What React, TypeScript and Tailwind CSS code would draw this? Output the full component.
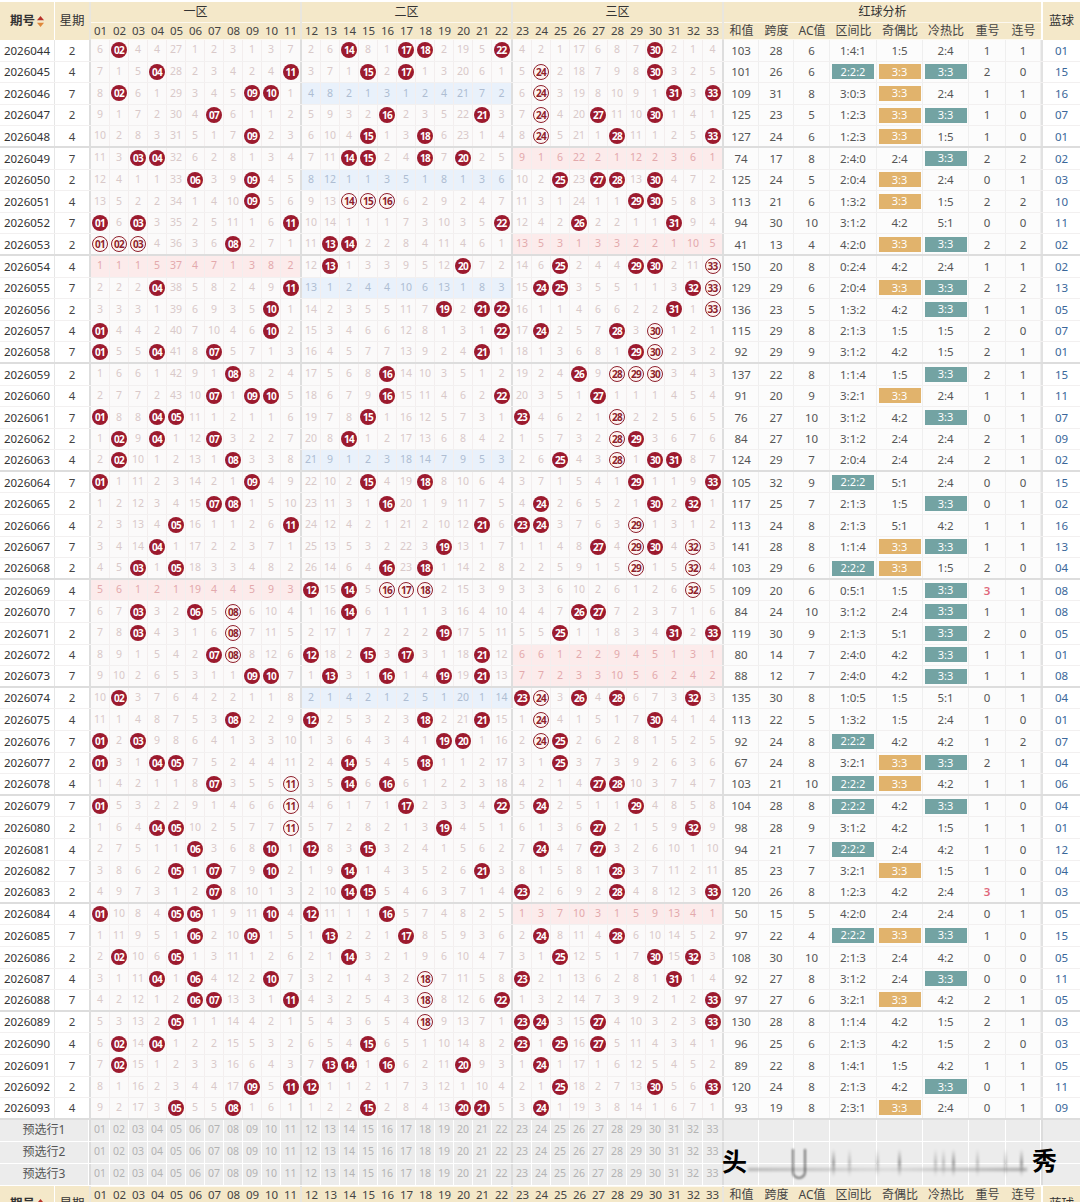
const ROWS = [
  '02 14 17 18 22 30|',
  '04 11 15 17 24 30|24',
  '02 09 10 24 31 33|24',
  '07 16 21 24 27 30|24',
  '09 15 18 24 28 33|24',
  '03 04 14 15 18 20|',
  '06 09 25 27 28 30|',
  '09 14 15 16 29 30|14 15 16',
  '01 03 11 22 26 31|',
  '01 02 03 08 13 14|01 02 03',
  '13 20 25 29 30 33|33',
  '04 11 24 25 32 33|33',
  '10 19 21 22 31 33|33',
  '01 10 22 24 28 30|30',
  '01 04 07 21 29 30|30',
  '08 16 26 28 29 30|28 29 30',
  '07 09 10 16 22 27|',
  '01 04 05 15 23 28|28',
  '02 04 07 14 28 29|28',
  '02 08 25 28 30 31|28',
  '01 09 15 18 29 33|',
  '07 08 16 24 30 32|',
  '05 11 21 23 24 29|29',
  '04 19 27 29 30 32|29 32',
  '03 05 16 18 29 32|29 32',
  '12 14 16 17 18 32|16 17 18 32',
  '03 06 08 14 26 27|08',
  '03 08 19 25 31 33|08',
  '07 08 12 15 17 21|08',
  '09 10 13 16 19 21|',
  '02 23 24 26 28 32|24',
  '08 12 18 21 24 30|24',
  '01 03 19 20 24 25|24',
  '01 04 05 14 18 25|',
  '07 11 14 16 27 28|11',
  '01 11 17 22 24 29|11',
  '04 05 11 19 27 32|11',
  '06 10 12 15 24 27|',
  '05 07 10 14 21 28|',
  '07 14 15 23 28 33|',
  '01 05 06 10 12 16|',
  '06 09 13 17 24 28|',
  '02 05 14 25 30 32|',
  '04 06 10 18 23 31|18',
  '06 07 11 18 22 33|18',
  '05 18 23 24 27 33|18',
  '02 04 15 23 25 27|',
  '02 13 14 16 20 24|',
  '09 11 12 25 30 33|',
  '05 08 15 20 21 24|',
];

// 和值 跨度 AC 区间比 奇偶比 冷热比 重号 连号 蓝球
const STATS = [
  '103 28 6 1:4:1 1:5 2:4 1 1 01',
  '101 26 6 2:2:2 3:3 3:3 2 0 15',
  '109 31 8 3:0:3 3:3 2:4 1 1 16',
  '125 23 5 1:2:3 3:3 3:3 1 0 07',
  '127 24 6 1:2:3 3:3 1:5 1 0 01',
  '74 17 8 2:4:0 2:4 3:3 2 2 02',
  '125 24 5 2:0:4 3:3 2:4 0 1 03',
  '113 21 6 1:3:2 3:3 1:5 2 2 10',
  '94 30 10 3:1:2 4:2 5:1 0 0 11',
  '41 13 4 4:2:0 3:3 3:3 2 2 02',
  '150 20 8 0:2:4 4:2 2:4 1 1 02',
  '129 29 6 2:0:4 3:3 3:3 2 2 13',
  '136 23 5 1:3:2 4:2 3:3 1 1 05',
  '115 29 8 2:1:3 1:5 1:5 2 0 07',
  '92 29 9 3:1:2 4:2 1:5 2 1 01',
  '137 22 8 1:1:4 1:5 3:3 2 1 15',
  '91 20 9 3:2:1 3:3 2:4 1 1 11',
  '76 27 10 3:1:2 4:2 3:3 0 1 07',
  '84 27 10 3:1:2 2:4 2:4 2 1 09',
  '124 29 7 2:0:4 2:4 2:4 2 1 02',
  '105 32 9 2:2:2 5:1 2:4 0 0 15',
  '117 25 7 2:1:3 1:5 3:3 0 1 02',
  '113 24 8 2:1:3 5:1 4:2 1 1 16',
  '141 28 8 1:1:4 3:3 3:3 1 1 13',
  '103 29 6 2:2:2 3:3 1:5 2 0 04',
  '109 20 6 0:5:1 1:5 3:3 3 1 08',
  '84 24 10 3:1:2 2:4 3:3 1 1 08',
  '119 30 9 2:1:3 5:1 3:3 2 0 05',
  '80 14 7 2:4:0 4:2 3:3 1 1 01',
  '88 12 7 2:4:0 4:2 3:3 1 1 08',
  '135 30 8 1:0:5 1:5 5:1 0 1 04',
  '113 22 5 1:3:2 1:5 2:4 1 0 01',
  '92 24 8 2:2:2 4:2 4:2 1 2 07',
  '67 24 8 3:2:1 3:3 3:3 2 1 04',
  '103 21 10 2:2:2 3:3 4:2 1 1 06',
  '104 28 8 2:2:2 4:2 3:3 1 0 04',
  '98 28 9 3:1:2 4:2 1:5 1 1 01',
  '94 21 7 2:2:2 2:4 4:2 1 0 12',
  '85 23 7 3:2:1 3:3 1:5 1 0 04',
  '120 26 8 1:2:3 4:2 2:4 3 1 03',
  '50 15 5 4:2:0 2:4 2:4 0 1 05',
  '97 22 4 2:2:2 3:3 3:3 1 0 15',
  '108 30 10 2:1:3 2:4 4:2 0 0 05',
  '92 27 8 3:1:2 2:4 3:3 0 0 11',
  '97 27 6 3:2:1 3:3 4:2 2 1 05',
  '130 28 8 1:1:4 4:2 1:5 2 1 03',
  '96 25 6 2:1:3 4:2 1:5 2 0 03',
  '89 22 8 1:4:1 1:5 4:2 1 1 05',
  '120 24 8 2:1:3 4:2 3:3 0 1 11',
  '93 19 8 2:3:1 3:3 2:4 0 1 09',
];

// omissions shown on the first row (2026044), 0 = drawn
const FIRST = [
  6, 0, 4, 4, 27, 1, 2, 3, 1, 3, 7,
  2, 6, 0, 8, 1, 0, 0, 2, 19, 5, 0,
  4, 2, 1, 17, 6, 8, 7, 0, 2, 1, 4,
];

const WEEK = [2, 4, 7];
const ZONES = [
  { title: '一区', from: 1 },
  { title: '二区', from: 12 },
  { title: '三区', from: 23 },
];
const STAT_HEAD = ['和值', '跨度', 'AC值', '区间比', '奇偶比', '冷热比', '重号', '连号'];
const STAT_W = ['w-[35px]', 'w-[35px]', 'w-[36px]', 'w-[47px]', 'w-[46px]', 'w-[46px]', 'w-[37px]', 'w-[35px]'];

const pad = (n: number) => String(n).padStart(2, '0');
const range = (from: number) => Array.from({ length: 11 }, (_, i) => from + i);

type Row = {
  period: number;
  week: number;
  drawn: Set<number>;
  ring: Set<number>;
  miss: number[];
  stats: string[];
};

function buildRows(): Row[] {
  let prev: number[] = [];
  return ROWS.map((line, i) => {
    const [d, r] = line.split('|');
    const drawn = new Set(d.split(' ').map(Number));
    const ring = new Set(r ? r.split(' ').map(Number) : []);
    const miss =
      i === 0
        ? FIRST
        : Array.from({ length: 33 }, (_, k) => (drawn.has(k + 1) ? 0 : prev[k] + 1));
    prev = miss;
    return {
      period: 2026044 + i,
      week: WEEK[i % 3],
      drawn,
      ring,
      miss,
      stats: STATS[i].split(' '),
    };
  });
}

function SortIcon() {
  return (
    <svg width="7" height="11" viewBox="0 0 7 11" className="ml-[2px]">
      <polygon points="3.5,0 7,4.3 0,4.3" fill="#b8322a" />
      <polygon points="0,6.7 7,6.7 3.5,11" fill="#e0873a" />
    </svg>
  );
}

function Ball({ n, ring }: { n: number; ring: boolean }) {
  return (
    <span
      className={`flex h-4 w-4 items-center justify-center rounded-full text-[10px] font-bold leading-none tracking-[-0.6px] ${
        ring
          ? 'border border-[#8e1f2c] bg-[#fdf4f2] text-[#8e1f2c]'
          : 'bg-[#9c1a2e] text-white'
      }`}
    >
      {pad(n)}
    </span>
  );
}

function StatCell({ i, v }: { i: number; v: string }) {
  const teal = (i === 3 && v === '2:2:2') || (i === 5 && v === '3:3');
  const gold = i === 4 && v === '3:3';
  return (
    <div className={`${STAT_W[i]} flex shrink-0 items-center justify-center border-r border-[#efefef]`}>
      {teal || gold ? (
        <span
          className={`flex h-[15px] w-[42px] items-center justify-center text-[11px] text-white ${
            teal ? 'bg-[#73a3a3]' : 'bg-[#e1b36c]'
          }`}
        >
          {v}
        </span>
      ) : (
        <span className={i === 6 && v === '3' ? 'font-semibold text-[#e0677a]' : 'text-[#555]'}>{v}</span>
      )}
    </div>
  );
}

function DataRow({ row, last }: { row: Row; last: boolean }) {
  return (
    <div
      className={`flex h-[21.6px] text-[11.5px] ${
        last ? 'border-b-2 border-[#dddddd]' : 'border-b border-[#f2f0f0]'
      }`}
    >
      <div className="flex w-[55px] shrink-0 items-center justify-center border-r border-[#e6e6e6] text-[#333]">
        {row.period}
      </div>
      <div className="flex w-[34px] shrink-0 items-center justify-center text-[#444]">{row.week}</div>
      {ZONES.map((z, zi) => {
        const nums = range(z.from);
        const empty = nums.every((n) => !row.drawn.has(n));
        const tone = empty
          ? zi === 1
            ? 'bg-[#e9f1fb] text-[#aebdd2]'
            : 'bg-[#fcebeb] text-[#e3a9ac]'
          : 'bg-[#fbfafa] text-[#d9c9c9]';
        return (
          <div key={z.title} className={`flex shrink-0 border-l-2 border-[#dedede] ${tone}`}>
            {nums.map((n) => (
              <div
                key={n}
                className="flex w-[19px] items-center justify-center border-r border-[#f3eeee] text-[10.5px] last:border-r-0"
              >
                {row.drawn.has(n) ? <Ball n={n} ring={row.ring.has(n)} /> : row.miss[n - 1]}
              </div>
            ))}
          </div>
        );
      })}
      <div className="flex shrink-0 border-l-2 border-[#dedede] bg-[#fcfcfc]">
        {row.stats.slice(0, 8).map((v, i) => (
          <StatCell key={i} i={i} v={v} />
        ))}
      </div>
      <div className="flex w-[39px] shrink-0 items-center justify-center border-l-2 border-[#e2e2e2] text-[#3a679a]">
        {row.stats[8]}
      </div>
    </div>
  );
}

function PickRow({ label }: { label: string }) {
  return (
    <div className="flex h-[22px] border-b border-white bg-[#ececec] text-[11.5px]">
      <div className="flex w-[89px] shrink-0 items-center justify-center border-r border-white text-[12px] text-[#555]">
        {label}
      </div>
      {ZONES.map((z) => (
        <div key={z.title} className="flex shrink-0 border-l-2 border-[#dcdcdc]">
          {range(z.from).map((n) => (
            <div
              key={n}
              className="flex w-[19px] items-center justify-center border-r border-white text-[10.5px] text-[#b3b3b3] last:border-r-0"
            >
              {pad(n)}
            </div>
          ))}
        </div>
      ))}
      <div className="flex shrink-0 border-l-2 border-[#dcdcdc]">
        {STAT_W.map((w, i) => (
          <div key={i} className={`${w} shrink-0 border-r border-white`} />
        ))}
      </div>
      <div className="w-[39px] shrink-0 border-l-2 border-[#dcdcdc]" />
    </div>
  );
}

function Header({ footer = false }: { footer?: boolean }) {
  const titleRow = (text: string) => (
    <div className="flex h-[20px] items-center justify-center text-[12px] text-[#333]">{text}</div>
  );
  return (
    <div className="flex h-[38px] bg-[#f4e8c9] text-[#333]">
      <div className="flex w-[55px] shrink-0 items-center justify-center border-r border-white text-[12.5px] font-bold">
        期号
        <SortIcon />
      </div>
      <div className="flex w-[34px] shrink-0 items-center justify-center text-[12.5px]">星期</div>
      {ZONES.map((z) => (
        <div key={z.title} className={`flex shrink-0 border-l-2 border-[#e9e6de] ${footer ? 'flex-col-reverse' : 'flex-col'}`}>
          {titleRow(z.title)}
          <div className="flex h-[18px] border-y border-white/70">
            {range(z.from).map((n) => (
              <div key={n} className="flex w-[19px] items-center justify-center text-[11.5px] text-[#444]">
                {pad(n)}
              </div>
            ))}
          </div>
        </div>
      ))}
      <div className={`flex shrink-0 border-l-2 border-[#e9e6de] ${footer ? 'flex-col-reverse' : 'flex-col'}`}>
        {titleRow('红球分析')}
        <div className="flex h-[18px] border-y border-white/70">
          {STAT_HEAD.map((t, i) => (
            <div key={t} className={`${STAT_W[i]} flex shrink-0 items-center justify-center text-[12px] text-[#444]`}>
              {t}
            </div>
          ))}
        </div>
      </div>
      <div className="flex w-[39px] shrink-0 items-center justify-center border-l-2 border-white text-[12.5px]">
        蓝球
      </div>
    </div>
  );
}

function Watermark() {
  return (
    <div className="pointer-events-none absolute left-[720px] top-[1145px] h-[44px] w-[345px]">
      <span className="absolute left-[2px] top-[4px] text-[25px] font-bold leading-none text-black">头</span>
      <span className="absolute right-[8px] top-[3px] text-[25px] font-bold leading-none text-black">秀</span>
      <div className="absolute left-[28px] right-[38px] top-[23px] h-[3px] bg-gradient-to-r from-[#888] via-[#ccc] to-[#777] opacity-60 blur-[1.5px]" />
      <div className="absolute left-[72px] top-[4px] h-[30px] w-[14px] rounded-b-full border-x-2 border-b-2 border-[#444] opacity-70 blur-[0.8px]" />
      {[112, 128, 156, 178, 214, 222, 232, 256, 284, 300].map((x, i) => (
        <div
          key={x}
          className="absolute top-[4px] h-[28px] w-[3px] bg-gradient-to-b from-transparent via-[#666] to-transparent blur-[1.2px]"
          style={{ left: x, opacity: i % 3 === 0 ? 0.6 : 0.35 }}
        />
      ))}
    </div>
  );
}

export default function App() {
  const rows = buildRows();
  return (
    <div className="relative w-[1080px] overflow-hidden bg-white pt-[2px] font-['Noto_Sans','Noto_Sans_CJK_SC',sans-serif]">
      <Header />
      {rows.map((row, i) => (
        <DataRow key={row.period} row={row} last={i % 5 === 4} />
      ))}
      <PickRow label="预选行1" />
      <PickRow label="预选行2" />
      <PickRow label="预选行3" />
      <Header footer />
      <Watermark />
    </div>
  );
}
